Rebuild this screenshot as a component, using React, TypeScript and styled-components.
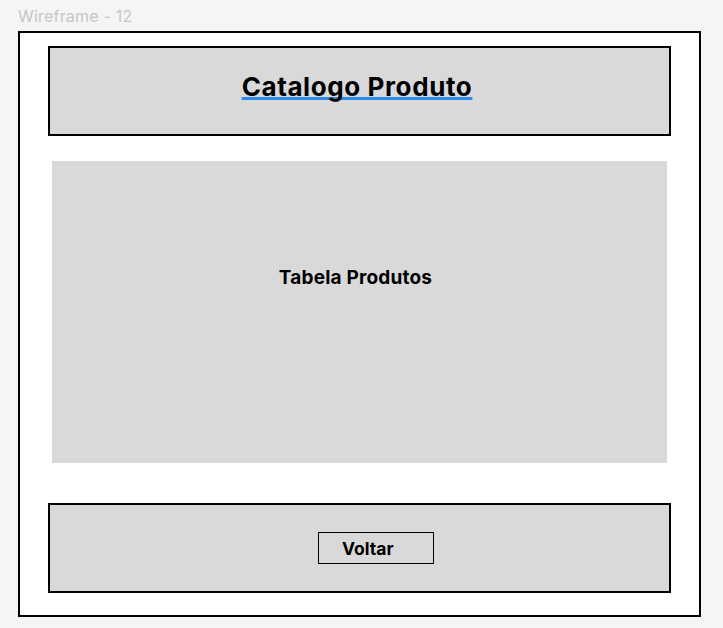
import React from 'react';
import styled, { createGlobalStyle } from 'styled-components';

const GlobalStyle = createGlobalStyle`
  html, body {
    margin: 0;
    padding: 0;
    background-color: #f5f5f5;
    font-family: Inter, "Noto Sans", "Liberation Sans", sans-serif;
  }
  * {
    box-sizing: border-box;
  }
`;

const App = () => {
  return (
    <>
      <GlobalStyle />
      <Page>
        <FrameLabel>Wireframe - 12</FrameLabel>
        <Frame>
          <Header>
            <Title>Catalogo Produto</Title>
          </Header>
          <Table>
            <TableTitle>Tabela Produtos</TableTitle>
          </Table>
          <Footer>
            <BackButton>Voltar</BackButton>
          </Footer>
        </Frame>
      </Page>
    </>
  );
};

export default App;

const Page = styled.div`
  width: 723px;
  height: 628px;
  padding-left: 18px;
`;

const FrameLabel = styled.div`
  height: 31px;
  padding-top: 7px;
  font-size: 16px;
  line-height: 19px;
  letter-spacing: 0.2px;
  color: #c6c6c6;
`;

const Frame = styled.div`
  width: 683px;
  height: 586px;
  border: 2px solid #000;
  background-color: #fff;
  display: flex;
  flex-direction: column;
  padding: 13px 28px 22px;
`;

const Header = styled.div`
  height: 90px;
  border: 2px solid #000;
  background-color: #d9d9d9;
  display: flex;
  justify-content: center;
  padding-top: 23px;
`;

const Title = styled.h1`
  margin: 0 5px 0 0;
  height: 32px;
  font-size: 26px;
  line-height: 32px;
  font-weight: 700;
  letter-spacing: 0.6px;
  color: #000;
  text-decoration: underline;
  text-decoration-color: #2e8ce6;
  text-decoration-thickness: 2.5px;
  text-underline-offset: 1px;
  text-decoration-skip-ink: none;
`;

const Table = styled.div`
  height: 302px;
  margin: 25px 4px 0;
  background-color: #d9d9d9;
  display: flex;
  justify-content: center;
  padding-top: 105px;
`;

const TableTitle = styled.div`
  font-size: 19px;
  line-height: 24px;
  height: 24px;
  font-weight: 700;
  letter-spacing: 0.2px;
  color: #000;
  margin-right: 8px;
`;

const Footer = styled.div`
  height: 90px;
  margin-top: 40px;
  border: 2px solid #000;
  background-color: #d9d9d9;
  display: flex;
  justify-content: center;
  align-items: center;
`;

const BackButton = styled.button`
  width: 116px;
  height: 32px;
  margin-left: 33px;
  border: 1.5px solid #000;
  background-color: #d9d9d9;
  display: flex;
  align-items: center;
  padding: 0 0 0 23px;
  font-family: inherit;
  font-size: 17.5px;
  font-weight: 700;
  color: #000;
`;
